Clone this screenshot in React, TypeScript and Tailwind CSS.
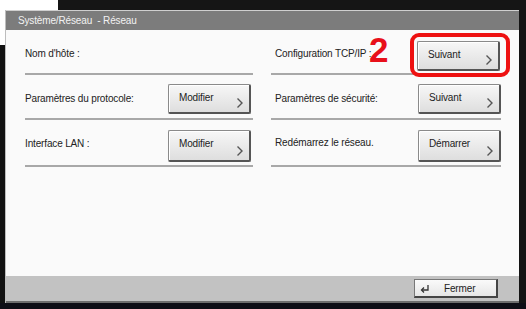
import React from "react";

const font = { fontFamily: '"Liberation Sans", Arial, sans-serif' };

function Chevron() {
  return (
    <svg width="8" height="12" viewBox="0 0 8 12" className="absolute right-[5px] bottom-[3px]">
      <path d="M1.5 1.5 L6 6 L1.5 10.5" fill="none" stroke="#555" strokeWidth="1.4" />
    </svg>
  );
}

const txt = "text-[10px] tracking-[-0.15px] text-[#222]";

function Btn({ label, className = "" }: { label: string; className?: string }) {
  return (
    <div
      className={`relative w-[83px] h-[30px] rounded-[2px] border border-[#8a8a8a] border-r-[2px] border-b-[2px] border-r-[#555] border-b-[#555] bg-gradient-to-b from-[#f7f7f7] to-[#dedede] shadow-[inset_1px_1px_0_#fff] ${className}`}
    >
      <span className={`absolute left-[10px] top-[5px] ${txt}`}>{label}</span>
      <Chevron />
    </div>
  );
}

function Row({ children, h, line = true }: { children: React.ReactNode; h: string; line?: boolean }) {
  return (
    <div className={`relative flex items-start justify-between ${h} ${line ? "border-b-2 border-[#a8a8a8]" : ""}`}>
      {children}
    </div>
  );
}

export default function App() {
  return (
    <div className="w-[526px] h-[309px] bg-white overflow-hidden flex flex-col" style={font}>
      <div className="flex h-[10px] shrink-0">
        <div className="w-[58px] bg-white" />
        <div className="flex-1 bg-[#151515]" />
      </div>
      <div className="flex flex-1">
        <div className="w-[5px] flex flex-col">
          <div className="h-[35px] bg-white" />
          <div className="flex-1 bg-[#121212]" />
        </div>
        <div className="w-[514px] flex flex-col border-l border-[#bdbdbd]">
          <div className="h-[20px] bg-[#7c7c7c] border-t border-[#cfcfcf] flex items-center pl-[12px] text-[10px] tracking-[-0.15px] text-[#f2f2f2]">
            Système/Réseau&nbsp;&nbsp;- Réseau
          </div>
          <div className="h-[246px] bg-[#fafafa] flex gap-[18px] pl-[19px] pr-[17px] relative">
            <div className="w-[228px] flex flex-col">
              <Row h="h-[45px]">
                <span className={`mt-[16px] ${txt}`}>Nom d'hôte :</span>
              </Row>
              <Row h="h-[45px]">
                <span className={`mt-[16px] ${txt}`}>Paramètres du protocole:</span>
                <Btn label="Modifier" className="mt-[9px] mr-[2px]" />
              </Row>
              <Row h="h-[47px]">
                <span className={`mt-[16px] ${txt}`}>Interface LAN :</span>
                <Btn label="Modifier" className="mt-[10px] mr-[2px] h-[32px]" />
              </Row>
            </div>
            <div className="w-[230px] flex flex-col">
              <Row h="h-[45px]">
                <span className={`mt-[16px] ml-[4px] ${txt}`}>Configuration TCP/IP :</span>
                <Btn label="Suivant" className="mt-[11px] h-[29px] mr-[1px]" />
                <span className="absolute left-[98px] top-[2px] text-[35px] font-bold leading-none text-[#e8101a]">2</span>
                <div className="absolute left-[139px] top-[3px] w-[100px] h-[44px] rounded-[9px] border-[4px] border-[#ee1111]" />
              </Row>
              <Row h="h-[45px]">
                <span className={`mt-[16px] ml-[4px] ${txt}`}>Paramètres de sécurité:</span>
                <Btn label="Suivant" className="mt-[9px]" />
              </Row>
              <Row h="h-[47px]">
                <span className={`mt-[15px] ml-[4px] ${txt}`}>Redémarrez le réseau.</span>
                <Btn label="Démarrer" className="mt-[10px] h-[32px]" />
              </Row>
            </div>
          </div>
          <div className="flex-1 bg-[#c2c2c2] border-b-[2px] border-[#6e6e6e] flex items-start justify-end pr-[21px] pt-[3px]">
            <div className={`w-[84px] h-[19px] bg-gradient-to-b from-[#fafafa] to-[#e6e6e6] border border-[#777] border-r-[2px] border-b-[2px] border-r-[#444] border-b-[#444] flex items-center ${txt}`}>
              <svg width="10" height="9" viewBox="0 0 10 9" className="ml-[5px]">
                <path d="M8 1 V6 H2" fill="none" stroke="#333" strokeWidth="1.3" />
                <path d="M4 3.5 L1.5 6 L4 8.5" fill="none" stroke="#333" strokeWidth="1.3" />
              </svg>
              <span className="ml-[14px]">Fermer</span>
            </div>
          </div>
        </div>
        <div className="flex-1 bg-[#141414]" />
      </div>
      <div className="h-[6px] bg-[#0e0e16] shrink-0" />
    </div>
  );
}
